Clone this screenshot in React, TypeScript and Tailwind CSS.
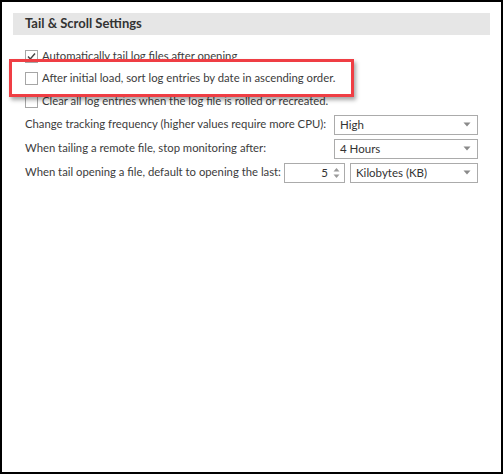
import React from "react";

const font = { fontFamily: 'Lato, "Noto Sans", Arial, sans-serif' };

function Check({ checked }: { checked?: boolean }) {
  return (
    <span className="relative flex h-[13px] w-[13px] shrink-0 items-center justify-center border border-[#a6a6a6] bg-white">
      {checked && (
        <svg width="11" height="11" viewBox="0 0 11 11" className="absolute">
          <path d="M2 5.5 L4.3 8 L9 2.5" fill="none" stroke="#444" strokeWidth="1.4" />
        </svg>
      )}
    </span>
  );
}

function Arrow() {
  return (
    <svg width="8" height="5" viewBox="0 0 8 5" className="shrink-0">
      <path d="M0.5 0.5 H7.5 L4 4.5 Z" fill="#8a8a8a" />
    </svg>
  );
}

function Select({ value, width }: { value: string; width: string }) {
  return (
    <div className={`flex h-[20px] ${width} shrink-0 items-center justify-between border border-[#ababab] bg-white pl-[5px] pr-[6px]`}>
      <span className="whitespace-nowrap text-[11.5px] text-[#333]">{value}</span>
      <Arrow />
    </div>
  );
}

function CheckRow({ checked, label }: { checked?: boolean; label: string }) {
  return (
    <div className="flex h-[22.5px] items-center gap-[4px]">
      <Check checked={checked} />
      <span className="whitespace-nowrap text-[11.3px] text-[#3c3c3c]">{label}</span>
    </div>
  );
}

export default function App() {
  return (
    <div className="relative h-[474px] w-[503px] border-2 border-black bg-white" style={font}>
      <div className="px-[11px] pt-[11px]">
        <div className="flex h-[22px] items-center bg-[#e6e6e6] px-[12px]">
          <span className="text-[13px] font-bold text-[#333]">Tail &amp; Scroll Settings</span>
        </div>
        <div className="mt-[10px] flex flex-col px-[12px]">
          <CheckRow checked label="Automatically tail log files after opening" />
          <CheckRow label="After initial load, sort log entries by date in ascending order." />
          <CheckRow label="Clear all log entries when the log file is rolled or recreated." />
          <div className="flex h-[24px] items-center">
            <span className="min-w-0 flex-1 whitespace-nowrap text-[11.3px] text-[#3c3c3c]">Change tracking frequency (higher values require more CPU):</span>
            <Select value="High" width="w-[144px]" />
          </div>
          <div className="flex h-[24px] items-center">
            <span className="min-w-0 flex-1 whitespace-nowrap text-[11.3px] text-[#3c3c3c]">When tailing a remote file, stop monitoring after:</span>
            <Select value="4 Hours" width="w-[144px]" />
          </div>
          <div className="flex h-[24px] items-center">
            <span className="min-w-0 flex-1 whitespace-nowrap text-[11.3px] text-[#3c3c3c]">When tail opening a file, default to opening the last:</span>
            <div className="flex h-[20px] w-[61px] shrink-0 items-center justify-end gap-[5px] border border-[#ababab] bg-white pr-[4px]">
              <span className="text-[11.5px] text-[#333]">5</span>
              <svg width="7" height="12" viewBox="0 0 7 12">
                <path d="M0.5 4.5 L3.5 1 L6.5 4.5 Z" fill="#9a9a9a" />
                <path d="M0.5 7.5 L3.5 11 L6.5 7.5 Z" fill="#9a9a9a" />
              </svg>
            </div>
            <div className="ml-[5px] shrink-0">
              <Select value="Kilobytes (KB)" width="w-[128px]" />
            </div>
          </div>
        </div>
      </div>
      <div className="pointer-events-none absolute left-[7px] top-[57px] h-[38px] w-[345px] border-[3px] border-[#ef3e44] shadow-[2px_3px_4px_rgba(0,0,0,0.35)]" />
    </div>
  );
}
